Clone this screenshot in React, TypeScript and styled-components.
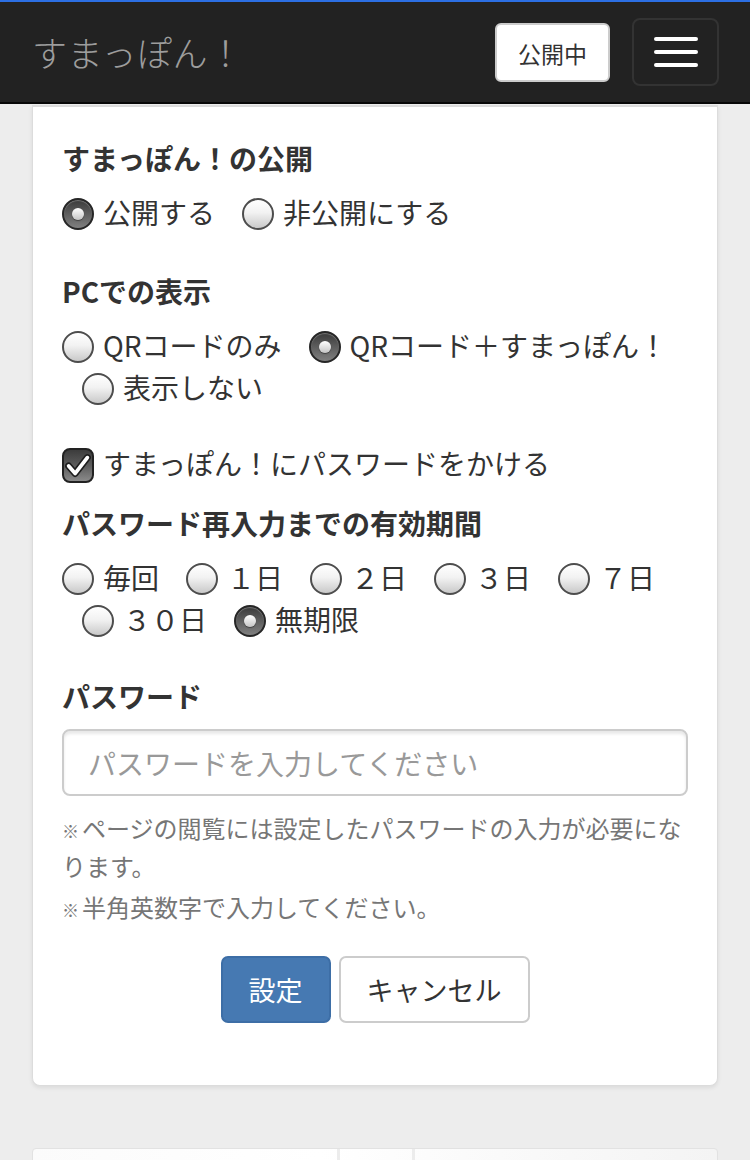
import React from "react";
import styled, { createGlobalStyle } from "styled-components";

const GlobalStyle = createGlobalStyle`
  html, body {
    margin: 0;
    padding: 0;
    background: #ededed;
  }
  body {
    font-family: "Noto Sans CJK JP", "Noto Sans", sans-serif;
    color: #333;
  }
`;

const publishOptions = [
  { label: "公開する", checked: true },
  { label: "非公開にする", checked: false },
];

const pcOptions = [
  { label: "QRコードのみ", checked: false },
  { label: "QRコード＋すまっぽん！", checked: true },
  { label: "表示しない", checked: false },
];

const periodOptions = [
  { label: "毎回", checked: false },
  { label: "１日", checked: false },
  { label: "２日", checked: false },
  { label: "３日", checked: false },
  { label: "７日", checked: false },
  { label: "３０日", checked: false },
  { label: "無期限", checked: true },
];

type Opt = { label: string; checked: boolean };

const RadioGroup = ({ options }: { options: Opt[] }) => (
  <OptionList>
    {options.map((o) => (
      <Option key={o.label}>
        <Radio $checked={o.checked}>{o.checked && <RadioDot />}</Radio>
        <span>{o.label}</span>
      </Option>
    ))}
  </OptionList>
);

const App = () => {
  return (
    <>
      <GlobalStyle />
      <NavBar>
        <Brand>すまっぽん！</Brand>
        <NavRight>
          <StatusButton>公開中</StatusButton>
          <MenuButton aria-label="menu">
            <Bar />
            <Bar />
            <Bar />
          </MenuButton>
        </NavRight>
      </NavBar>

      <Main>
        <Card>
          <Heading>すまっぽん！の公開</Heading>
          <RadioGroup options={publishOptions} />

          <Section $top={38}>
            <Heading>PCでの表示</Heading>
            <RadioGroup options={pcOptions} />
          </Section>

          <CheckRow>
            <CheckBox>
              <svg width="30" height="30" viewBox="0 0 30 30">
                <polyline
                  points="5,15 12,23 25,6"
                  fill="none"
                  stroke="#1e1e1e"
                  strokeWidth="7.5"
                  strokeLinecap="round"
                  strokeLinejoin="round"
                />
                <polyline
                  points="5,15 12,23 25,6"
                  fill="none"
                  stroke="#fff"
                  strokeWidth="4"
                  strokeLinecap="round"
                  strokeLinejoin="round"
                />
              </svg>
            </CheckBox>
            <span>すまっぽん！にパスワードをかける</span>
          </CheckRow>

          <Section $top={19}>
            <Heading>パスワード再入力までの有効期間</Heading>
            <RadioGroup options={periodOptions} />
          </Section>

          <Section $top={36}>
            <Heading>パスワード</Heading>
            <PasswordInput type="password" placeholder="パスワードを入力してください" />
            <Help>
              <p>
                <Mark>※</Mark>ページの閲覧には設定したパスワードの入力が必要になります。
              </p>
              <p>
                <Mark>※</Mark>半角英数字で入力してください。
              </p>
            </Help>
          </Section>

          <Actions>
            <Button $primary>設定</Button>
            <Button>キャンセル</Button>
          </Actions>
        </Card>

        <PreviewCard>
          <PreviewCell $w={304} />
          <PreviewCell $w={72} />
          <PreviewCell />
        </PreviewCard>
      </Main>
    </>
  );
};

export default App;

const NavBar = styled.header`
  box-sizing: border-box;
  height: 104px;
  background: #222;
  border-top: 2px solid #2c6fe3;
  border-bottom: 2px solid #080808;
  display: flex;
  align-items: center;
  justify-content: space-between;
  padding: 0 31px 0 32px;
`;

const Brand = styled.div`
  font-size: 35px;
  font-weight: 300;
  color: #9d9d9d;
  letter-spacing: 0.5px;
  line-height: 40px;
`;

const NavRight = styled.div`
  display: flex;
  align-items: center;
  gap: 22px;
`;

const StatusButton = styled.button`
  box-sizing: border-box;
  width: 115px;
  height: 59px;
  background: #fff;
  border: 2px solid #ccc;
  border-radius: 6px;
  font-family: inherit;
  font-size: 23px;
  color: #333;
  margin-top: 1px;
`;

const MenuButton = styled.button`
  box-sizing: border-box;
  width: 87px;
  height: 68px;
  background: transparent;
  border: 2px solid #333;
  border-radius: 8px;
  display: flex;
  flex-direction: column;
  align-items: center;
  justify-content: center;
  gap: 9px;
  padding: 0;
`;

const Bar = styled.span`
  display: block;
  width: 44px;
  height: 4px;
  border-radius: 2px;
  background: #fff;
`;

const Main = styled.main`
  padding: 1px 32px 0;
`;

const Card = styled.section`
  box-sizing: border-box;
  background: #fff;
  border: 1px solid #dcdcdc;
  border-top: 2px solid #dcdcdc;
  border-radius: 0 0 8px 8px;
  box-shadow: 0 2px 4px rgba(0, 0, 0, 0.08);
  padding: 31px 29px 62px;
  font-size: 28px;
`;

const Section = styled.div<{ $top: number }>`
  margin-top: ${(p) => p.$top}px;
`;

const Heading = styled.h3`
  margin: 0 0 13px;
  font-size: 28px;
  font-weight: 700;
  line-height: 40px;
  color: #333;
`;

const OptionList = styled.div`
  line-height: 42px;
  padding-left: 20px;
  text-indent: -20px;
  margin-right: -30px;
`;

const Option = styled.label`
  display: inline-flex;
  align-items: center;
  vertical-align: top;
  height: 42px;
  margin-right: 27px;
  text-indent: 0;
  white-space: nowrap;
  color: #333;
`;

const Radio = styled.span<{ $checked: boolean }>`
  box-sizing: border-box;
  flex-shrink: 0;
  width: 32px;
  height: 32px;
  margin: 3px 9px 0 0;
  border-radius: 50%;
  display: flex;
  align-items: center;
  justify-content: center;
  border: 2px solid ${(p) => (p.$checked ? "#262626" : "#4d4d4d")};
  background: ${(p) =>
    p.$checked
      ? "linear-gradient(to bottom, #3a3a3a 0%, #5a5a5a 45%, #808080 100%)"
      : "linear-gradient(to bottom, #ffffff 0%, #f2f2f2 45%, #c9c9c9 100%)"};
  box-shadow: inset 0 1px 1px rgba(255, 255, 255, 0.3);
`;

const RadioDot = styled.span`
  width: 12px;
  height: 12px;
  border-radius: 50%;
  background: linear-gradient(to bottom, #ffffff, #c4c4c4);
  box-shadow: 0 1px 1px rgba(0, 0, 0, 0.4);
`;

const CheckRow = styled.label`
  display: flex;
  align-items: center;
  height: 42px;
  margin-top: 34px;
  color: #333;
`;

const CheckBox = styled.span`
  box-sizing: border-box;
  flex-shrink: 0;
  width: 32px;
  height: 35px;
  margin: 5px 9px 0 0;
  border-radius: 8px;
  border: 2px solid #222;
  background: linear-gradient(to bottom, #3c3c3c 0%, #5c5c5c 50%, #8a8a8a 100%);
  display: flex;
  align-items: center;
  justify-content: center;
  overflow: hidden;
`;

const PasswordInput = styled.input`
  box-sizing: border-box;
  display: block;
  width: 100%;
  height: 67px;
  padding: 0 24px;
  border: 2px solid #ccc;
  border-radius: 8px;
  box-shadow: inset 0 3px 3px rgba(0, 0, 0, 0.09);
  font-family: inherit;
  font-size: 28px;
  color: #333;
  outline: none;

  &::placeholder {
    color: #999;
  }
`;

const Help = styled.div`
  margin-top: 13px;
  font-size: 24px;
  line-height: 38px;
  color: #767676;

  p {
    margin: 0 0 3px;
  }
`;

const Mark = styled.span`
  display: inline-block;
  font-size: 17px;
  line-height: 22px;
  margin-right: 3px;
`;

const Actions = styled.div`
  display: flex;
  justify-content: center;
  gap: 8px;
  margin-top: 30px;
`;

const Button = styled.button<{ $primary?: boolean }>`
  box-sizing: border-box;
  height: 67px;
  padding: 0 26px;
  border-radius: 7px;
  font-family: inherit;
  font-size: 27px;
  border: 2px solid ${(p) => (p.$primary ? "#3d6ea6" : "#cccccc")};
  background: ${(p) => (p.$primary ? "#4679b2" : "#ffffff")};
  color: ${(p) => (p.$primary ? "#ffffff" : "#333333")};
`;

const PreviewCard = styled.div`
  display: flex;
  height: 200px;
  margin-top: 62px;
  background: linear-gradient(100deg, #fbfbfb, #ffffff 40%, #f3f3f3);
  border: 1px solid #e2e2e2;
  border-radius: 4px 4px 0 0;
  overflow: hidden;
`;

const PreviewCell = styled.div<{ $w?: number }>`
  flex: ${(p) => (p.$w ? `0 0 ${p.$w}px` : "1")};
  border-right: 3px solid #ececec;

  &:last-child {
    border-right: none;
  }
`;
